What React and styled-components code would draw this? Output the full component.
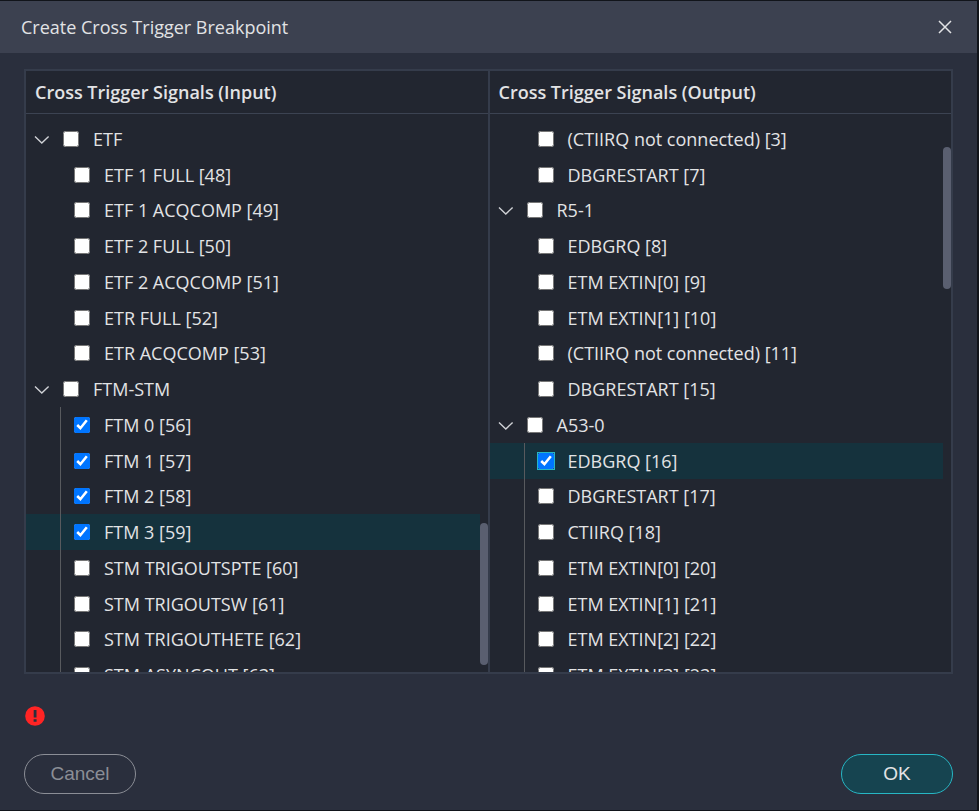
import React from "react";
import styled, { createGlobalStyle } from "styled-components";

const GlobalStyle = createGlobalStyle`
  *, *::before, *::after { box-sizing: border-box; }
  body {
    margin: 0;
    background: #11141a;
    color: #e2e3e5;
    font-family: "Open Sans", "Noto Sans", sans-serif;
    font-size: 18px;
    line-height: 24px;
  }
`;

const Dialog = styled.section`
  display: flex;
  flex-direction: column;
  height: 100vh;
  min-height: 480px;
  background: #2a2f3d;
  border: 0 solid #11141a;
  border-width: 1px 2px 1px 0;
`;

const TitleBar = styled.header`
  display: flex;
  align-items: center;
  justify-content: space-between;
  flex: none;
  height: 52px;
  padding: 0 22px 0 21px;
  background: #3c4150;
`;

const Title = styled.h1`
  margin: 0;
  font-size: 18px;
  font-weight: 400;
`;

const CloseButton = styled.button`
  display: flex;
  align-items: center;
  justify-content: center;
  width: 20px;
  height: 20px;
  padding: 0;
  border: 0;
  background: none;
  color: #e2e3e5;
`;

const Body = styled.div`
  display: flex;
  flex: 1;
  flex-direction: column;
  min-height: 0;
  padding: 16px 24px;
`;

const Panels = styled.div`
  display: grid;
  grid-template-columns: 1fr 1fr;
  flex: 1;
  gap: 2px;
  min-height: 0;
  border: 2px solid #353c4b;
  background: #353c4b;
`;

const Panel = styled.section`
  display: flex;
  flex-direction: column;
  min-width: 0;
  min-height: 0;
  background: #222630;
`;

const PanelTitle = styled.h2`
  flex: none;
  height: 43px;
  margin: 0;
  padding: 0 9px;
  border-bottom: 1px solid #3c4352;
  font-size: 18px;
  font-weight: 600;
  line-height: 42px;
  white-space: nowrap;
`;

const Viewport = styled.div`
  display: flex;
  flex: 1;
  min-height: 0;
  overflow: hidden;
`;

const Tree = styled.ul`
  display: grid;
  grid-template-rows: repeat(16, 1fr);
  flex: 1;
  height: 579px;
  margin: 0;
  padding: 7px 0 0;
  list-style: none;
`;

const Row = styled.li`
  display: flex;
  background: ${(p) => (p.$selected ? "#15323d" : "transparent")};
`;

const Twisty = styled.button`
  display: flex;
  align-items: center;
  width: 37px;
  padding: 2px 0 0 8px;
  border: 0;
  background: none;
  color: #d0d2d6;
`;

const Indent = styled.span`
  width: 35px;
  margin-right: 13px;
  border-right: 1px solid ${(p) => (p.$guide ? "#585a5e" : "transparent")};
`;

const Label = styled.label`
  display: flex;
  align-items: center;
  gap: 14px;
  white-space: nowrap;
`;

const Check = styled.input`
  flex: none;
  width: 16px;
  height: 16px;
  margin: 0;
  accent-color: #0075ff;
  outline: ${(p) => (p.$focused ? "1px solid #27b6c4" : "none")};
`;

const Track = styled.div`
  flex: none;
  width: 8px;
  padding-top: ${(p) => p.$offset}px;
`;

const Thumb = styled.div`
  height: 142px;
  border-radius: 4px;
  background: #5a5f70;
`;

const Status = styled.div`
  display: flex;
  align-items: center;
  flex: none;
  height: 80px;
  padding: 4px 0 0 1px;
`;

const Actions = styled.footer`
  display: flex;
  justify-content: space-between;
  flex: none;
`;

const ActionButton = styled.button`
  width: 112px;
  height: 40px;
  border: 1px solid ${(p) => (p.$primary ? "#27b6c4" : "#8b8e96")};
  border-radius: 20px;
  background: ${(p) => (p.$primary ? "#164450" : "transparent")};
  color: ${(p) => (p.$primary ? "#e2e3e5" : "#8b8e96")};
  font-family: "Liberation Sans", Arial, sans-serif;
  font-size: 19px;
`;

const group = (label) => ({ label, group: true });
const item = (label, state = {}) => ({ label, ...state });

const inputs = [
  group("ETF"),
  item("ETF 1 FULL [48]"),
  item("ETF 1 ACQCOMP [49]"),
  item("ETF 2 FULL [50]"),
  item("ETF 2 ACQCOMP [51]"),
  item("ETR FULL [52]"),
  item("ETR ACQCOMP [53]"),
  group("FTM-STM"),
  item("FTM 0 [56]", { guide: true, checked: true }),
  item("FTM 1 [57]", { guide: true, checked: true }),
  item("FTM 2 [58]", { guide: true, checked: true }),
  item("FTM 3 [59]", { guide: true, checked: true, selected: true }),
  item("STM TRIGOUTSPTE [60]", { guide: true }),
  item("STM TRIGOUTSW [61]", { guide: true }),
  item("STM TRIGOUTHETE [62]", { guide: true }),
  item("STM ASYNCOUT [63]", { guide: true }),
];

const outputs = [
  item("(CTIIRQ not connected) [3]"),
  item("DBGRESTART [7]"),
  group("R5-1"),
  item("EDBGRQ [8]"),
  item("ETM EXTIN[0] [9]"),
  item("ETM EXTIN[1] [10]"),
  item("(CTIIRQ not connected) [11]"),
  item("DBGRESTART [15]"),
  group("A53-0"),
  item("EDBGRQ [16]", { guide: true, checked: true, selected: true, focused: true }),
  item("DBGRESTART [17]", { guide: true }),
  item("CTIIRQ [18]", { guide: true }),
  item("ETM EXTIN[0] [20]", { guide: true }),
  item("ETM EXTIN[1] [21]", { guide: true }),
  item("ETM EXTIN[2] [22]", { guide: true }),
  item("ETM EXTIN[3] [23]", { guide: true }),
];

function Chevron() {
  return (
    <svg width="16" height="10" viewBox="0 0 16 10" fill="none" aria-hidden="true">
      <path d="M1 1.5 7.8 8 14.6 1.5" stroke="currentColor" strokeWidth="1.4" />
    </svg>
  );
}

function SignalPanel({ title, rows, thumbOffset }) {
  return (
    <Panel>
      <PanelTitle>{title}</PanelTitle>
      <Viewport>
        <Tree>
          {rows.map((row) => (
            <Row key={row.label} $selected={row.selected}>
              {row.group ? (
                <Twisty type="button" aria-expanded="true" aria-label={`Collapse ${row.label}`}>
                  <Chevron />
                </Twisty>
              ) : (
                <Indent $guide={row.guide} />
              )}
              <Label>
                <Check type="checkbox" defaultChecked={row.checked} $focused={row.focused} />
                {row.label}
              </Label>
            </Row>
          ))}
        </Tree>
        <Track $offset={thumbOffset}>
          <Thumb />
        </Track>
      </Viewport>
    </Panel>
  );
}

export default function App() {
  return (
    <>
      <GlobalStyle />
      <Dialog role="dialog" aria-labelledby="dialog-title">
        <TitleBar>
          <Title id="dialog-title">Create Cross Trigger Breakpoint</Title>
          <CloseButton type="button" aria-label="Close">
            <svg width="14" height="14" viewBox="0 0 14 14" fill="none" aria-hidden="true">
              <path d="M1 1 13 13M13 1 1 13" stroke="currentColor" strokeWidth="1.5" />
            </svg>
          </CloseButton>
        </TitleBar>
        <Body>
          <Panels>
            <SignalPanel title="Cross Trigger Signals (Input)" rows={inputs} thumbOffset={409} />
            <SignalPanel title="Cross Trigger Signals (Output)" rows={outputs} thumbOffset={33} />
          </Panels>
          <Status role="alert">
            <svg width="20" height="20" viewBox="0 0 20 20" aria-label="Error">
              <circle cx="10" cy="10" r="9.8" fill="#ff2424" />
              <path d="M8.7 4h2.8v7.6H8.7zM8.6 13.2h3v2.6h-3z" fill="#2a2f3d" />
            </svg>
          </Status>
          <Actions>
            <ActionButton type="button">Cancel</ActionButton>
            <ActionButton type="button" $primary>
              OK
            </ActionButton>
          </Actions>
        </Body>
      </Dialog>
    </>
  );
}
